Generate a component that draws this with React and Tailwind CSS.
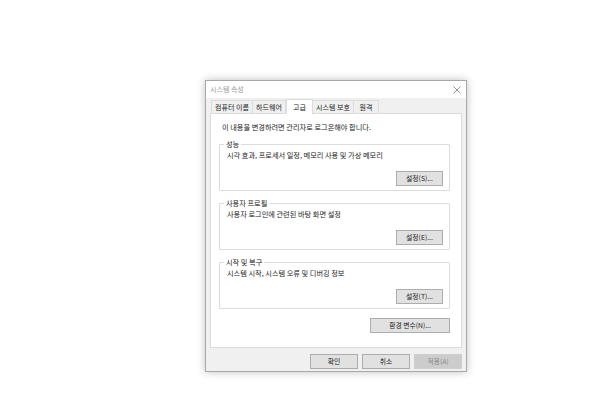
export default function App() {
  const font = { fontFamily: '"Noto Sans CJK KR", "Noto Sans", sans-serif' };
  const Btn = ({ children, w = "w-[47px]", disabled }) => (
    <div
      className={`${w} h-[15px] flex items-center justify-center border text-[6.8px] leading-none ${
        disabled ? "border-[#cfcfcf] bg-[#cccccc] text-[#8a8a8a]" : "border-[#adadad] bg-[#e1e1e1] text-[#222]"
      }`}
    >
      {children}
    </div>
  );
  const Group = ({ label, text, btn }) => (
    <div className="relative h-[47px] border border-[#dcdcdc] rounded-[1px]">
      <div className="absolute left-[4px] top-[-6px] bg-white px-[2px] text-[7.2px] leading-[10px] text-[#222]">{label}</div>
      <div className="pl-[7px] pt-[5px] text-[7.2px] leading-[10px] text-[#222]">{text}</div>
      <div className="flex justify-end pr-[6px] mt-[11px]">
        <Btn>{btn}</Btn>
      </div>
    </div>
  );
  const Tab = ({ children, w, active }) =>
    active ? (
      <div className={`${w} h-[15px] -mb-[1px] mt-[-2px] border border-[#dcdcdc] border-b-0 bg-white flex items-start pt-[2px] justify-center text-[7px] leading-[10px] text-[#222] relative z-10`}>
        {children}
      </div>
    ) : (
      <div className={`${w} h-[13px] border border-[#dcdcdc] border-b-0 -ml-[1px] first:ml-0 bg-[#f0f0f0] flex items-center justify-center text-[7px] leading-none text-[#222]`}>
        {children}
      </div>
    );
  return (
    <div className="w-[600px] h-[399px] bg-white overflow-hidden" style={font}>
      <div className="ml-[205px] mt-[80px] w-[262px] h-[292px] border border-[#a8a8a8] bg-[#f0f0f0] shadow-[0_0_8px_rgba(0,0,0,0.25)] flex flex-col">
        <div className="h-[17px] bg-white flex items-center justify-between pl-[4px] pr-[5px]">
          <span className="text-[7px] text-[#999] leading-none">시스템 속성</span>
          <svg width="8" height="8" viewBox="0 0 8 8">
            <path d="M0.5 0.5 L7.5 7.5 M7.5 0.5 L0.5 7.5" stroke="#777" strokeWidth="0.8" />
          </svg>
        </div>
        <div className="px-[4px] pt-[2px] flex flex-col flex-1">
          <div className="flex items-end pl-[1px] h-[13px]">
            <Tab w="w-[42px]">컴퓨터 이름</Tab>
            <Tab w="w-[34px]">하드웨어</Tab>
            <Tab w="w-[27px]" active>고급</Tab>
            <Tab w="w-[42px]">시스템 보호</Tab>
            <Tab w="w-[26px]">원격</Tab>
          </div>
          <div className="h-[235px] bg-white border border-[#dcdcdc] pl-[8px] pr-[11px]">
            <div className="pt-[8px] pl-[3px] text-[7.2px] leading-[10px] text-[#222]">
              이 내용을 변경하려면 관리자로 로그온해야 합니다.
            </div>
            <div className="mt-[12px] flex flex-col gap-[12px]">
              <Group label="성능" text="시각 효과, 프로세서 일정, 메모리 사용 및 가상 메모리" btn="설정(S)..." />
              <Group label="사용자 프로필" text="사용자 로그인에 관련된 바탕 화면 설정" btn="설정(E)..." />
              <Group label="시작 및 복구" text="시스템 시작, 시스템 오류 및 디버깅 정보" btn="설정(T)..." />
            </div>
            <div className="flex justify-end mt-[9px]">
              <Btn w="w-[80px]">환경 변수(N)...</Btn>
            </div>
          </div>
          <div className="flex justify-end gap-[4px] mt-[6px]">
            <Btn w="w-[48px]">확인</Btn>
            <Btn w="w-[48px]">취소</Btn>
            <Btn w="w-[48px]" disabled>적용(A)</Btn>
          </div>
        </div>
      </div>
    </div>
  );
}
